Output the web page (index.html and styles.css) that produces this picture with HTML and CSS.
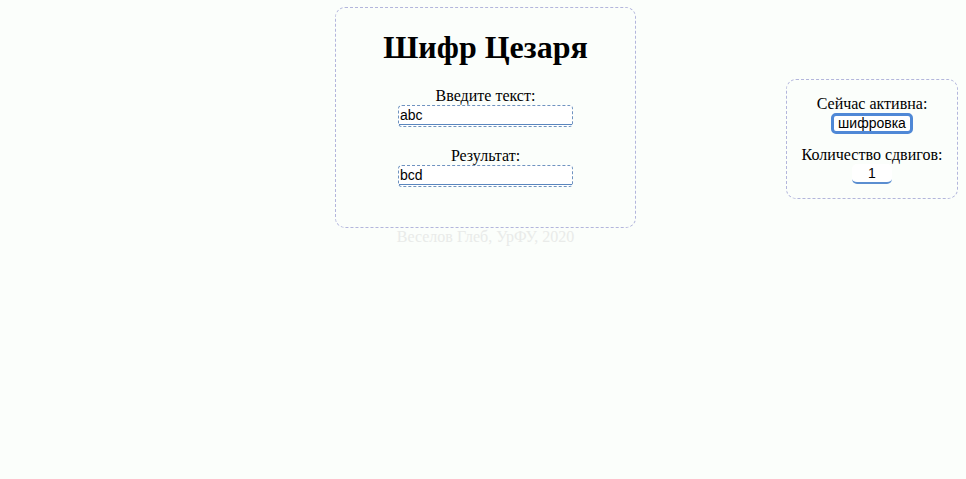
FILE: index.html
```html
<!DOCTYPE html>
<html lang="ru">
<head>
<meta charset="utf-8">
<title>Шифр Цезаря</title>
<link rel="stylesheet" href="styles.css">
</head>
<body>
<div class="page">
  <div class="main-col">
    <div class="card">
      <h1 class="title">Шифр Цезаря</h1>
      <div class="field">
        <label class="label" for="src">Введите текст:</label>
        <input class="text-input" id="src" type="text" value="abc">
      </div>
      <div class="field field-second">
        <label class="label" for="dst">Результат:</label>
        <input class="text-input" id="dst" type="text" value="bcd">
      </div>
    </div>
    <div class="footer">Веселов Глеб, УрФУ, 2020</div>
  </div>
  <div class="side-card">
    <div class="label">Сейчас активна:</div>
    <button class="mode-btn" type="button">шифровка</button>
    <div class="label side-label">Количество сдвигов:</div>
    <input class="shift-input" type="text" value="1">
  </div>
</div>
</body>
</html>
```
FILE: styles.css
```css
html, body {
  margin: 0;
  padding: 0;
  background: #fbfefb;
}
body {
  font-family: "Liberation Serif", "Times New Roman", serif;
  font-size: 16px;
  color: #000;
}
.page {
  display: flex;
  align-items: flex-start;
  padding: 7px 8px 0 335px;
}
.main-col {
  width: 301px;
  display: flex;
  flex-direction: column;
}
.card {
  border: 1px dashed #b3b6dc;
  border-radius: 10px;
  height: 219px;
  display: flex;
  flex-direction: column;
  align-items: center;
}
.title {
  margin: 21px 0 21px;
  font-size: 32px;
  font-weight: bold;
  line-height: 37px;
}
.field {
  display: flex;
  flex-direction: column;
  align-items: center;
}
.field-second {
  margin-top: 20px;
}
.label {
  line-height: 18px;
  text-align: center;
}
.text-input {
  box-sizing: border-box;
  width: 175px;
  height: 22px;
  margin: 0;
  padding: 0 1px 3px;
  border: 1px dashed #6f93c0;
  border-radius: 4px;
  background: #fff linear-gradient(#5a86bd, #5a86bd) left bottom 1px / 100% 1px no-repeat;
  font-family: "Liberation Sans", Arial, sans-serif;
  font-size: 14px;
  color: #000;
  outline: none;
}
.footer {
  text-align: center;
  line-height: 18px;
  color: #e9ebe9;
}
.side-card {
  margin-left: auto;
  margin-top: 72px;
  box-sizing: border-box;
  width: 172px;
  height: 120px;
  border: 1px dashed #b3b6dc;
  border-radius: 10px;
  display: flex;
  flex-direction: column;
  align-items: center;
  padding-top: 15px;
}
.mode-btn {
  margin: 0;
  height: 21px;
  padding: 0 4px;
  border: 3px solid #4f88d6;
  border-radius: 5px;
  background: #fff;
  font-family: "Liberation Sans", Arial, sans-serif;
  font-size: 14px;
  line-height: 15px;
  color: #000;
}
.side-label {
  margin-top: 12px;
}
.shift-input {
  box-sizing: border-box;
  width: 40px;
  height: 20px;
  margin: 0;
  padding: 0;
  border: none;
  border-bottom: 2px solid #5b8ed0;
  border-radius: 5px;
  background: #fff;
  text-align: center;
  font-family: "Liberation Sans", Arial, sans-serif;
  font-size: 14px;
  color: #000;
  outline: none;
}
```
